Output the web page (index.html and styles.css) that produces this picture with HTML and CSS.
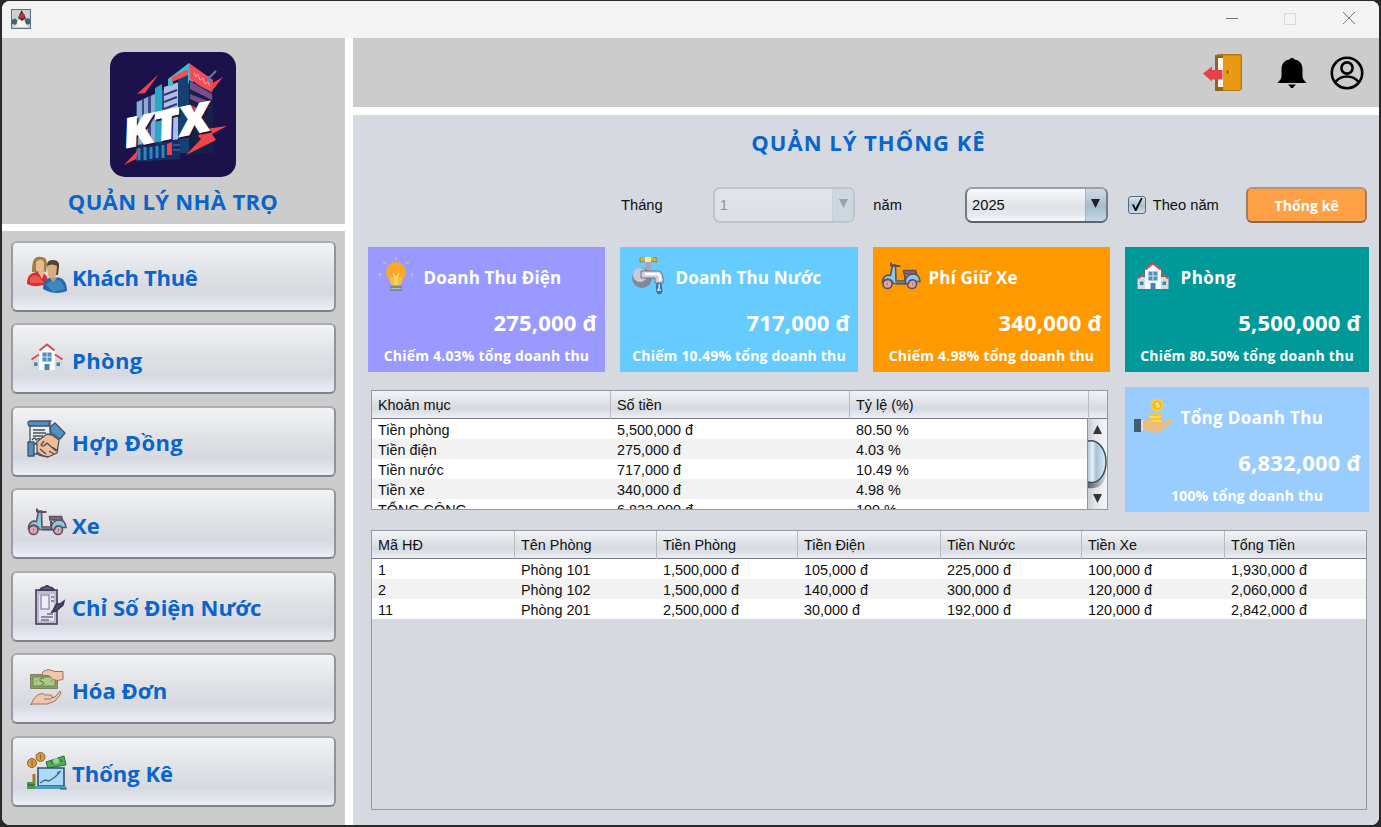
FILE: index.html
```html
<!DOCTYPE html>
<html lang="vi">
<head>
<meta charset="utf-8">
<title>Quản lý nhà trọ</title>
<link rel="stylesheet" href="styles.css">
</head>
<body>
<svg class="defs" width="0" height="0">
  <symbol id="house" viewBox="0 0 40 40">
    <path d="M4.500 20h9v12h-9zM26.500 20h9v12h-9z" fill="#d3d9dc"/>
    <path d="M12 13l8-6 8 6v19H12z" fill="#f7fafc"/>
    <path d="M4.500 21.500l7.500-5M35.500 21.500L28 16.500M12.500 12.500L20 6.500l7.500 6" fill="none" stroke="#d9494f" stroke-width="2"/>
    <path d="M15.500 14.500h9v9h-9z" fill="#4d8fbd"/>
    <path d="M20 14v9.500M15.500 19h9" stroke="#d9e9f2"/>
    <path d="M17.500 26h5v6h-5zM7 24.500h3.500V28H7zM29.500 24.500H33V28h-3.500z" fill="#4482b4"/>
  </symbol>
  <symbol id="scooter" viewBox="0 0 40 40">
    <g stroke="#61505f" stroke-width="1.600" fill="none">
      <circle cx="6.500" cy="27" r="4.500" fill="#d7a9ae"/><circle cx="31" cy="27" r="4.500" fill="#d7a9ae"/>
      <path d="M1.500 25c0-5 4-8 8-6.500l2-10.500h3l.5 16H25v2.500H12.500c-2-5-7-6-11-1.500z" fill="#8cc9e4"/>
      <path d="M24.500 26.500c-1-6 3-9.500 8-9.500 4 0 6 3 6.500 7.500h-4c-2-3-7-2-7.500 2z" fill="#8cc9e4"/>
      <path d="M22.500 13.500h12l1 3.500H23z" fill="#826b79"/>
      <path d="M24 18v6M15 26.500h10" stroke-width="2"/>
      <path d="M10 5.500v3l2.500.5h7" stroke-width="2"/>
      <path d="M31 27h.5M6.500 27h.5" stroke-width="3"/>
    </g>
  </symbol>
</svg>
<div class="window">
  <header class="titlebar">
    <svg class="app-icon" width="20" height="20" viewBox="0 0 20 20">
      <path d="M0 0h20v20H0z" fill="#587084"/><path d="M1 1h18v18H1z" fill="#cbd0d4"/>
      <path d="M1 11q3-3 5 0v5l-5-1zM13 11q3-3 6-1v5l-5 1z" fill="#53606a"/><path d="M4 18q2-4 4-8h5q1 4 4 8z" fill="#f4f4ed"/>
      <path d="M10.500 1l4.500 8-4 3-4-3z" fill="#343338"/><circle cx="10.800" cy="7" r="2.800" fill="#d4292e"/>
    </svg>
    <svg class="win-buttons" width="130" height="14" viewBox="0 0 130 14" fill="none">
      <path d="M0 8.500h12" stroke="#777"/><path d="M58.500 3.500h11v11h-11z" stroke="#d9d9d9"/><path d="M117 2l12 12M129 2l-12 12" stroke="#777"/>
    </svg>
  </header>
  <div class="layout">
    <aside class="sidebar">
      <div class="brand">
        <svg class="logo" width="126" height="126" viewBox="0 0 126 126">
          <rect width="126" height="125" rx="15" fill="#1b114b"/>
          <path d="M26 50l29-13v65l-29 7z" fill="#314f86"/>
          <path d="M27 50l5-2v56l-5 1zM34 47l4-2v58l-4 1zM41 44l4-2v56h-4z" fill="#91a9d2"/>
          <path d="M45 36l7-4v65l-7 1z" fill="#24a9c6"/>
          <path d="M54 35l15-5v60l-15 5z" fill="#aebde6"/>
          <path d="M54 43l13-5M54 50l13-5M54 57l13-5M54 64l13-5" stroke="#323b79" stroke-width="2"/>
          <path d="M68 26l11-5v80H68z" fill="#173f70"/>
          <path d="M58 27l21-16 4 7v15l-5-2V20L63 28v6h-5z" fill="#42bbce"/>
          <path d="M62 25l16-8v6l-16 7z" fill="#f04f58"/>
          <path d="M79 11l24 17-1 15-22-16z" fill="#ef4d59"/>
          <path d="M84 21l2 4 2-3 2 6 3-2 2 6 3-2 2 5" fill="none" stroke="#f7a5ac"/>
          <path d="M79 28l24 13v60l-24 2z" fill="#172049"/>
          <path d="M80 29l22 13v6L80 37zM80 42l20 8v6l-20-9z" fill="#7b4b8c"/>
          <path d="M80 53l10 4-1 14-9-6z" fill="#e93f50"/>
          <path d="M27 93l43-6v20l-43 3z" fill="#172d67"/>
          <path d="M29 96v12M35 95v13M41 95v12M47 94v12M53 93v13" stroke="#2d86bc" stroke-width="3"/>
          <path d="M57 92l5-2v13h-5z" fill="#f3404b"/><path d="M63 93h7M63 98h7" stroke="#6377a9"/>
          <path d="M49 22L27 42l8-1zM113 25l-12 7v8zM29 97L14 113l12-6zM117 74l-22 3-7 7 3 3-15 16 30-15-4-6z" fill="#ee444b"/>
          <path d="M106 19l-8 8M98 24v4h4" stroke="#667bbd" stroke-width="2" fill="none"/>
          <g transform="translate(16 96) rotate(-12)"><text class="logo-text shadow" x="1" y="2" textLength="88" lengthAdjust="spacingAndGlyphs" aria-hidden="true">KTX</text><text class="logo-text" textLength="88" lengthAdjust="spacingAndGlyphs">KTX</text></g>
        </svg>
        <h2 class="brand-name">QUẢN LÝ NHÀ TRỌ</h2>
      </div>
      <nav class="nav">
        <button class="nav-btn tight"><svg viewBox="0 0 40 40">
          <path d="M5 17C5 4 8 1 14 2c6 0 7 5 5 15z" fill="#a47b45"/><path d="M9 7q5-5 8 0v8q-4 5-8 0z" fill="#e8b88e"/>
          <path d="M0 29c0-8 3-11 10-12 7-1 11 4 11 11q-10 6-21 1z" fill="#d92c2c"/><path d="M3 23q4-5 9-1l5 6H3z" fill="#ef5754"/>
          <path d="M11 17l4 7 3-8z" fill="#e6ba96"/><path d="M20 10q0-5 6-5 7 0 6 7l-1 8h-9z" fill="#514330"/>
          <path d="M20 11q5-3 10 0l-1 10q-4 3-8 0z" fill="#d7ad83"/><path d="M16 34c0-9 5-12 12-12 8 0 12 5 12 14q-12 5-24-2z" fill="#2468aa"/>
          <path d="M19 30q6-7 15-4l4 8-12 3z" fill="#3e86c3"/><path d="M22 22l4 5 5-5z" fill="#c99e77"/></svg><span>Khách Thuê</span></button>
        <button class="nav-btn wide"><svg viewBox="0 0 40 40"><use href="#house"/></svg><span>Phòng</span></button>
        <button class="nav-btn wide"><svg viewBox="0 0 40 40">
          <g stroke="#47505b" stroke-width="1.300" stroke-linejoin="round"><path d="M3 3h20v26H3z" fill="#e9eef2"/><path d="M1 3q0-2 3-2h20q-2 1-2 5H2q-1-1-1-3z" fill="#4d91c5"/>
          <path d="M6 10h12M6 13h13M6 16h10M5 20q3-4 4 0 3-3 5 0" fill="none"/><path d="M23 7l5-4 10 10-5 6-9-6z" fill="#4d91c5"/>
          <path d="M12 20l8-6 5 1 7 5-2 13-9 4-9-2-4-3v-8z" fill="#f1bd98"/><path d="M17 21l-3 4q2 3 6-2l9 8M13 29l6 5M10 32l6 4M25 27l6 4M22 31l5 3" fill="none"/>
          <path d="M1 22h6v14H1z" fill="#4d91c5"/><path d="M7 24h3v10H7z" fill="#dce7ef"/></g></svg><span>Hợp Đồng</span></button>
        <button class="nav-btn"><svg viewBox="0 0 40 40"><use href="#scooter"/></svg><span>Xe</span></button>
        <button class="nav-btn"><svg viewBox="0 0 40 40"><g stroke="#3c3552" fill="none" stroke-width="1.500">
          <path d="M9 5h21v34H9z" fill="#bdb9ce"/><path d="M12 9h15v27H12z" fill="#e4e2ec" stroke="none"/><path d="M13 5q1-3 5-3l2-2 2 2q4 0 5 3z" fill="#665d80"/>
          <path d="M14 10h8v14h-8z" fill="#eeedf4" stroke="#9992ac"/><path d="M24 12h3M24 16h3M20 29h6M14 32h12M14 35h8" stroke-width="1"/><path d="M25 27l3-5q1-4 5-3l4-3-1 4-7 6z" fill="#504866"/></g></svg><span>Chỉ Số Điện Nước</span></button>
        <button class="nav-btn"><svg viewBox="0 0 40 40">
          <g stroke="#817d63"><path d="M3.500 6.500h27v14h-27z" fill="#7da35d"/><path d="M6 9h22v9H6z" fill="#acc883"/><path d="M17 10q-5 0-4 3l3 1q2 3-2 3M9 13h1M24 13h1" fill="none" stroke="#4e7448"/></g>
          <g stroke="#9c7463" fill="#f2c6ac"><path d="M36 3.500h-8l-7-2-5 2-1 4h7l4 4 4 1 6-1z"/><path d="M4 37q3-9 9-11 4-1 5 1h6q3 1 0 3l4-1 5-6q2 1 0 4l-5 6-8 3H4z"/><path d="M17 31h7" fill="none"/></g></svg><span>Hóa Đơn</span></button>
        <button class="nav-btn"><svg viewBox="0 0 40 40">
          <g stroke="#8d6131"><circle cx="5" cy="12" r="4.500" fill="#d79b3c"/><circle cx="13.500" cy="6" r="4.500" fill="#d79b3c"/><path d="M5 9.500v5M13.500 3.500v5"/></g>
          <path d="M19 11l18-6 2 9-18 3z" fill="#52aa59" stroke="#2d6943"/><circle cx="29" cy="10" r="3" fill="#9bd08b"/><path d="M24 10l2 3M33 8l2 3" stroke="#225c3b"/>
          <path d="M11 17h26v18H11z" fill="#a9dafa" stroke="#31516e" stroke-width="1.600"/><path d="M13 32l5-3 4 1 6-4 5-5M30 22l4-2" fill="none" stroke="#496575" stroke-width="1.300"/>
          <path d="M8 35h31v3H8z" fill="#4d9ac3"/><path d="M7 23v11" stroke="#ad742f" stroke-width="3"/><path d="M0 31h8v7H0z" fill="#4b9b48"/><path d="M1 34h7M33 38h7" stroke="#294f3c"/></svg><span>Thống Kê</span></button>
      </nav>
    </aside>
    <main class="main">
      <div class="topbar">
        <svg width="40" height="40" viewBox="0 0 40 40"><path d="M12 2h12v36H12z" fill="#8e651f"/><path d="M15 5h7v29h-7z" fill="#fff5eb"/><path d="M20 2h19v35H20z" fill="#e99a13"/><path d="M14 1h24l1 2v32l-2 3H20v-1h17.500V2.500H14z" fill="#b57917"/><path d="M24.500 17.500v3" stroke="#53401d" stroke-width="1.500"/><path d="M0 20.500l9-7v3.500h10.500v9.500H9v2z" fill="#e7404a"/></svg>
        <svg class="bell" width="30" height="32" viewBox="0 0 30 32"><path d="M15 1c2 0 2 1 2.500 1.500 6 1 8 5 8 10v6c0 4 2 5 4 7.500h-29c2-2.500 4-3.500 4-7.500v-6c0-5 2-9 8-10C13 2 13 1 15 1zM11 27.500h8l-2 2L16 31h-2l-1-1.500z"/></svg>
        <svg class="user" width="34" height="34" viewBox="0 0 34 34" fill="none" stroke="#050505" stroke-width="2.600"><circle cx="17" cy="17" r="15.200"/><circle cx="17" cy="12" r="5.600"/><path d="M5.500 26q4-5.500 11.500-5.500T28.500 26"/></svg>
      </div>
      <section class="content">
        <h1 class="page-title">QUẢN LÝ THỐNG KÊ</h1>
        <div class="filters">
          <span class="lbl-month">Tháng</span>
          <div class="combo disabled"><span class="combo-value">1</span><span class="combo-arrow"><svg width="9" height="9" viewBox="0 0 9 9"><path d="M0 0h9L4.500 9z" fill="currentColor"/></svg></span></div>
          <span class="lbl-year">năm</span>
          <div class="combo"><span class="combo-value">2025</span><span class="combo-arrow"><svg width="9" height="9" viewBox="0 0 9 9"><path d="M0 0h9L4.500 9z" fill="currentColor"/></svg></span></div>
          <label class="check"><span class="check-box"><svg width="18" height="18" viewBox="0 0 18 18"><path d="M4 8.500h2l1.500 3.500L13 2h1.800L8.500 15H7z" fill="#050505"/></svg></span><span>Theo năm</span></label>
          <button class="run-btn">Thống kê</button>
        </div>
        <div class="board">
          <article class="card electric"><div class="card-head"><svg viewBox="0 0 40 40"><g fill="#f7a928"><circle cx="20" cy="15" r="10"/><path d="M12.500 20h15l-3 8h-9z" fill="#f9bd42"/></g><path d="M17 16l2 4v8M23 16l-2 4v8" stroke="#ffe07b" stroke-width="1.300" fill="none"/><path d="M14 29h12v5H14z" fill="#7b8998"/><path d="M15 31.500h10" stroke="#b9c0c5"/><g fill="#c9b9b7"><circle cx="20" cy="1.500" r="1.300"/><circle cx="8.500" cy="6" r="1.300"/><circle cx="31.500" cy="6" r="1.300"/><circle cx="4" cy="17.500" r="1.500"/><circle cx="36" cy="17.500" r="1.500"/></g></svg><span>Doanh Thu Điện</span></div><strong>275,000 đ</strong><p>Chiếm 4.03% tổng doanh thu</p></article>
          <article class="card water"><div class="card-head"><svg viewBox="0 0 40 40"><g transform="translate(2 -2)"><path d="M10 2q8-3 17 1v4q-8-2-17 0z" fill="#d8ac3d" stroke="#a88130"/><path d="M15 2h6v5h-6z" fill="#fff0a2"/><path d="M16 7h5v9h-5z" fill="#a6a8b2"/><circle cx="12" cy="23" r="10" fill="#85879a"/><circle cx="10" cy="20" r="7" fill="#c9cad6"/><path d="M11 16h18q5 2 4 12h-8v-5H11z" fill="#ced0dc" stroke="#6e738a"/><path d="M15 19h13q3 2 2 7" fill="none" stroke="#fff" stroke-width="2.500"/><path d="M26.500 28h5l1 8q-1 4-4 3-4-1-2-11z" fill="#356fae"/><path d="M29 29q1 4-1 6h3" stroke="#c5edff" stroke-width="1.500" fill="none"/></g></svg><span>Doanh Thu Nước</span></div><strong>717,000 đ</strong><p>Chiếm 10.49% tổng doanh thu</p></article>
          <article class="card parking"><div class="card-head"><svg viewBox="0 0 40 40"><use href="#scooter"/></svg><span>Phí Giữ Xe</span></div><strong>340,000 đ</strong><p>Chiếm 4.98% tổng doanh thu</p></article>
          <article class="card room"><div class="card-head"><svg viewBox="0 0 40 40"><use href="#house"/></svg><span>Phòng</span></div><strong>5,500,000 đ</strong><p>Chiếm 80.50% tổng doanh thu</p></article>
          <div class="table summary">
            <div class="row head"><span>Khoản mục</span><span>Số tiền</span><span>Tỷ lệ (%)</span><span></span></div>
            <div class="summary-view">
              <div class="rows">
                <div class="row"><span>Tiền phòng</span><span>5,500,000 đ</span><span>80.50 %</span></div>
                <div class="row"><span>Tiền điện</span><span>275,000 đ</span><span>4.03 %</span></div>
                <div class="row"><span>Tiền nước</span><span>717,000 đ</span><span>10.49 %</span></div>
                <div class="row"><span>Tiền xe</span><span>340,000 đ</span><span>4.98 %</span></div>
                <div class="row"><span>TỔNG CỘNG</span><span>6,832,000 đ</span><span>100 %</span></div>
              </div>
              <svg class="scroll" width="20" height="90" viewBox="0 0 20 90">
                <defs><linearGradient id="track"><stop stop-color="#c4c8d0"/><stop offset=".4" stop-color="#e3e5e9"/><stop offset="1" stop-color="#f4f5f7"/></linearGradient><linearGradient id="thumb"><stop stop-color="#b2c6d6"/><stop offset=".25" stop-color="#e3f1fa"/><stop offset=".45" stop-color="#a5c1d6"/><stop offset="1" stop-color="#deedf8"/></linearGradient><linearGradient id="shade"><stop stop-color="#5c6066"/><stop offset="1" stop-color="#d9dce1"/></linearGradient></defs>
                <path d="M0 0h20v90H0z" fill="url(#track)"/><path d="M.5 0v90" stroke="#8f949e"/>
                <path d="M6 15h9L10.500 6zM6 75h9L10.500 84z" fill="#333539"/>
                <path d="M1 61q15 4 18-15v10q-3 15-18 13z" fill="url(#shade)"/>
                <path d="M1 22C12 20 19 31 19 43S12 66 1 63z" fill="url(#thumb)"/><path d="M1 22C12 20 19 31 19 43S12 66 1 63" fill="none" stroke="#3c4e5f" stroke-width="1.500"/>
              </svg>
            </div>
          </div>
          <article class="card total"><div class="card-head"><svg viewBox="0 0 40 40"><path d="M17 17h12v11H17z" fill="#f8c332"/><circle cx="24" cy="8" r="6.500" fill="#f9ce3d"/><circle cx="24" cy="8" r="4.500" fill="#f3b925"/><path d="M26 6h-3v2h3v2h-3M17 20h11M17 24h11" stroke="#fff18b" fill="none"/><path d="M9 24q8-3 14 2l8-1 7-3q3 1-1 5l-11 8q-6 2-9-1l-8-1z" fill="#edbd7c"/><path d="M1 22h7v13H1z" fill="#445b74"/><path d="M8 23h2v11H8z" fill="#d8e1e8"/></svg><span>Tổng Doanh Thu</span></div><strong>6,832,000 đ</strong><p>100% tổng doanh thu</p></article>
        </div>
        <div class="table invoices">
          <div class="row head"><span>Mã HĐ</span><span>Tên Phòng</span><span>Tiền Phòng</span><span>Tiền Điện</span><span>Tiền Nước</span><span>Tiền Xe</span><span>Tổng Tiền</span></div>
          <div class="rows">
            <div class="row"><span>1</span><span>Phòng 101</span><span>1,500,000 đ</span><span>105,000 đ</span><span>225,000 đ</span><span>100,000 đ</span><span>1,930,000 đ</span></div>
            <div class="row"><span>2</span><span>Phòng 102</span><span>1,500,000 đ</span><span>140,000 đ</span><span>300,000 đ</span><span>120,000 đ</span><span>2,060,000 đ</span></div>
            <div class="row"><span>11</span><span>Phòng 201</span><span>2,500,000 đ</span><span>30,000 đ</span><span>192,000 đ</span><span>120,000 đ</span><span>2,842,000 đ</span></div>
          </div>
        </div>
      </section>
    </main>
  </div>
</div>
</body>
</html>
```
FILE: styles.css
```css
* { box-sizing: border-box; }
body {
  margin: 0; width: 1381px; height: 827px; overflow: hidden;
  padding: 1px 2px 2px; background: #29292b;
  font: 14.4px "Liberation Sans", Arial, sans-serif; color: #101010;
}
.defs { position: absolute; }
h1, h2, p { margin: 0; }
button { margin: 0; font: inherit; }
svg { display: block; flex: none; }
.window { height: 824px; display: flex; flex-direction: column; border-radius: 8px; overflow: hidden; background: #fff; }
.titlebar { height: 37px; flex: none; background: #f3f3f3; display: flex; justify-content: space-between; padding: 8px 23px 0 9px; }
.win-buttons { margin-top: 1px; overflow: visible; }
.layout { display: flex; gap: 8px; flex: 1; min-height: 0; }
.sidebar { width: 343px; display: flex; flex-direction: column; gap: 7px; }
.brand { height: 186px; background: #ccc; padding: 14px 1px 0 0; display: flex; flex-direction: column; align-items: center; }
.logo { margin-right: 1px; }
.logo-text { font: italic 800 40px "Open Sans", sans-serif; fill: #fff; stroke: #fff; stroke-width: 1px; }
.logo-text.shadow { fill: #1b1640; stroke: #1b1640; }
.brand-name, .page-title, .nav-btn, .card, .run-btn { font-family: "Open Sans", "Noto Sans", sans-serif; font-weight: 700; }
.brand-name { font-size: 22px; line-height: 30px; margin-top: 8px; color: #0765cb; letter-spacing: .35px; }
.nav { flex: 1; background: #ccc; padding: 9.500px 9px; display: flex; flex-direction: column; gap: 11.600px; }
.nav-btn {
  height: 71px; flex: none; display: flex; align-items: center; gap: 5px; padding: 2px 14px 0;
  border: 2px solid #a3a6ac; border-color: #a9acb0 #8f939a #7d8189 #989ca3; border-radius: 6px;
  background: linear-gradient(#f2f3f5, #dfe1e5 45%, #d6d9e0 75%, #ebeef6);
  color: #0765cb; font-size: 22px; letter-spacing: 0; white-space: nowrap;
}
.nav-btn.tight { letter-spacing: -.3px; }
.nav-btn.wide { letter-spacing: .35px; }
.nav-btn svg { width: 40px; height: 40px; margin-top: -4px; }
.main { flex: 1; min-width: 0; display: flex; flex-direction: column; gap: 8px; }
.topbar { height: 69px; background: #ccc; display: flex; justify-content: flex-end; align-items: center; padding-right: 15px; }
.bell { margin-left: 34px; }
.user { margin-left: 23px; }
.content { flex: 1; background: #d6d9e0; padding: 11px 10px 15px 15px; }
.page-title { font-size: 22px; line-height: 32px; text-align: center; color: #0765cb; letter-spacing: 1px; }
.filters { display: flex; align-items: center; height: 36px; margin: 29px 2px 24px 253px; font-size: 14.700px; }
.lbl-month { width: 92px; }
.lbl-year { width: 92px; padding-left: 18px; }
.combo { width: 143px; height: 36px; display: flex; justify-content: space-between; border: 2px solid #868a92; border-color: #9c9fa5 #747d86 #5d6470 #777b83; border-radius: 7px; background: linear-gradient(#f8f9fb, #dfe2e6 55%, #e5e8ee 80%, #f5f7fb); overflow: hidden; }
.combo-value { padding-left: 5px; line-height: 33px; }
.combo-arrow { width: 21px; padding-bottom: 3px; display: flex; align-items: center; justify-content: center; color: #202225; background: linear-gradient(#cfdbe5, #a7bbcb 55%, #c4d9e8); border-left: 1px solid #a3b3c1; }
.combo.disabled { border-color: #c0c4cb; background: linear-gradient(#e2e4e9, #dcdfe4); color: #8e9195; }
.disabled .combo-arrow { color: #9da1a8; background: #ced6df; border-color: #c6ced7; }
.lbl-year + .combo { margin-left: 18px; }
.check { display: flex; align-items: center; gap: 7px; margin-left: 20px; width: 119px; }
.check-box { width: 18px; height: 18px; display: flex; align-items: center; justify-content: center; border: 1.500px solid #526d82; border-radius: 3px; background: linear-gradient(#dae5ed, #aac1d2 50%, #c6dceb); }
.run-btn { width: 121px; height: 36px; padding: 0; border: 2px solid; border-color: #b99370 #9d8063 #816b57 #9d8063; border-radius: 6px; background: #ffa047; color: #fff; font-size: 14px; letter-spacing: .1px; }
.board { display: grid; grid-template-columns: 237px 238px 237px 244px; gap: 15px; }
.card { height: 125px; color: #fff; padding: 8px 8px 0; }
.electric { background: #99f; }
.water { background: #6cf; }
.parking { background: #f90; }
.room { background: #099; }
.total { background: #9cf; }
.card-head { height: 46px; display: flex; gap: 7.500px; font-size: 17px; line-height: 46px; letter-spacing: .15px; }
.card-head svg { width: 40px; height: 40px; margin-top: 2px; }
.room .card-head { letter-spacing: .5px; }
.total .card-head { letter-spacing: .35px; }
.card strong { display: block; font-size: 22px; font-weight: 700; line-height: 43px; height: 44px; text-align: right; letter-spacing: .2px; }
.card p { font-size: 14px; line-height: 22px; text-align: center; white-space: nowrap; letter-spacing: .2px; }
.table { border: 1px solid #9598a0; overflow: hidden; }
.row { display: grid; height: 20px; line-height: 22px; }
.row > span { padding-left: 6px; white-space: nowrap; }
.rows .row { background: #fff; }
.rows .row:nth-child(even) { background: #f2f2f2; }
.row.head { height: 28px; line-height: 28px; border-bottom: 1px solid #777a83; background: linear-gradient(#f3f4f6, #dcdfe4 50%, #d6d9df 65%, #eceff6); }
.row.head > span { border-right: 1px solid #b7bac1; }
.row.head > span:last-child { border-right: 0; }
.summary { grid-column: span 3; height: 120px; margin: 3px 2px 0 3px; }
.summary .row { grid-template-columns: 239px 239px 1fr; }
.summary .row.head { grid-template-columns: 239px 239px 239px 1fr; }
.summary-view { display: flex; height: 90px; }
.summary-view .rows { flex: 1; }
.invoices { height: 280px; margin: 18px 2px 0 3px; }
.invoices .row { grid-template-columns: 143px 142px 141px 143px 141px 143px 1fr; }
```
